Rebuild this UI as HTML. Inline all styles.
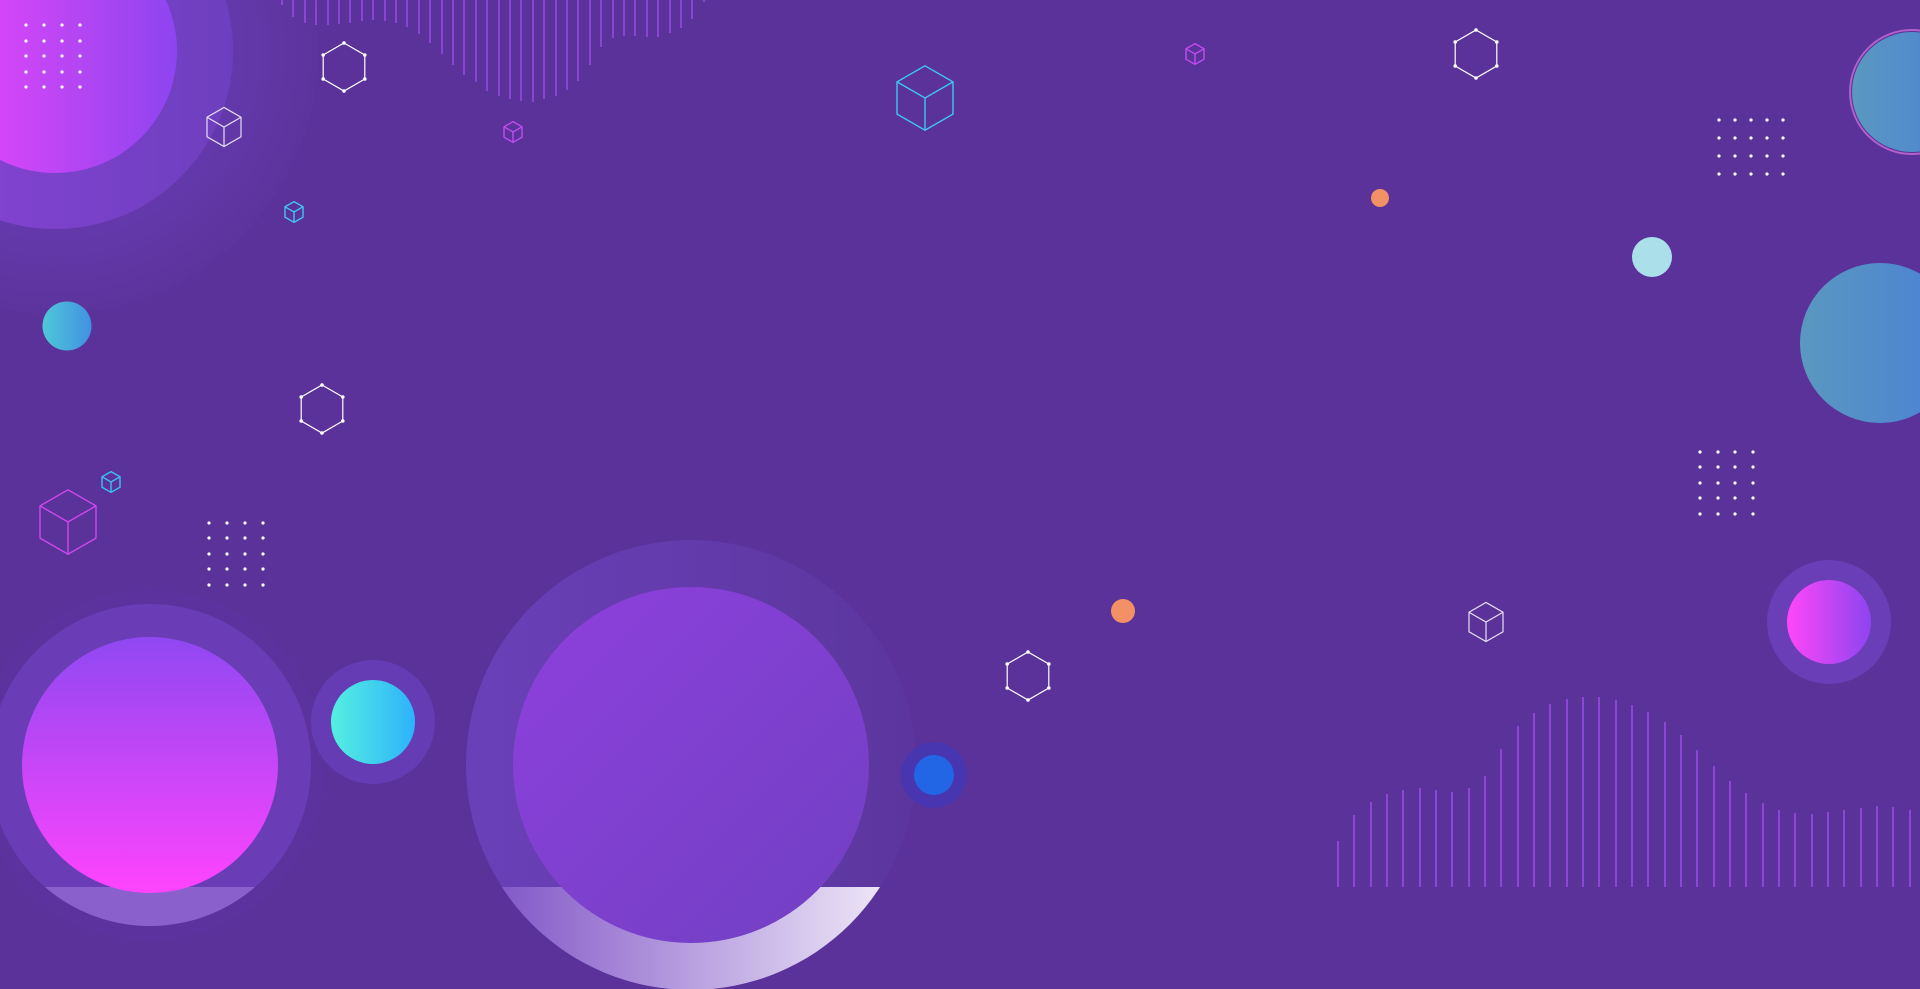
<!DOCTYPE html>
<html><head><meta charset="utf-8"><style>
html,body{margin:0;padding:0;background:#5a3299;overflow:hidden}
svg{display:block}
</style></head><body>
<svg width="1920" height="989" viewBox="0 0 1920 989" xmlns="http://www.w3.org/2000/svg">
<defs>
<linearGradient id="gTL" x1="0" y1="0" x2="1" y2="0"><stop offset="0" stop-color="#ee46fb"/><stop offset="1" stop-color="#8d45ef"/></linearGradient>
<linearGradient id="gTLring" x1="0" y1="0" x2="1" y2="0"><stop offset="0" stop-color="#8a44d8"/><stop offset="1" stop-color="#6d3fbe"/></linearGradient>
<radialGradient id="gTLout" cx="0.5" cy="0.5" r="0.5"><stop offset="0.6" stop-color="#6a3db8"/><stop offset="1" stop-color="#5e349f"/></radialGradient>
<linearGradient id="gBL" x1="0" y1="0" x2="0" y2="1"><stop offset="0" stop-color="#8f48f2"/><stop offset="1" stop-color="#ff44fd"/></linearGradient>
<linearGradient id="gCy" x1="0" y1="0" x2="1" y2="0"><stop offset="0" stop-color="#55f0e0"/><stop offset="1" stop-color="#2db2fb"/></linearGradient>
<linearGradient id="gCy2" x1="0" y1="0" x2="1" y2="0"><stop offset="0" stop-color="#4ec8d8"/><stop offset="1" stop-color="#4290e2"/></linearGradient>
<linearGradient id="gBig" x1="0" y1="0" x2="1" y2="1"><stop offset="0" stop-color="#8e40dd"/><stop offset="1" stop-color="#7040c2"/></linearGradient>
<linearGradient id="gBigRing" x1="0" y1="0" x2="1" y2="0"><stop offset="0" stop-color="#6a40b8"/><stop offset="1" stop-color="#5c369e"/></linearGradient>
<linearGradient id="gWhite" x1="0" y1="0" x2="1" y2="0"><stop offset="0" stop-color="#7a4cc4"/><stop offset="1" stop-color="#f6f2fb"/></linearGradient>
<linearGradient id="gRP" x1="0" y1="0" x2="1" y2="0"><stop offset="0" stop-color="#ff46f8"/><stop offset="1" stop-color="#8c45f0"/></linearGradient>
<linearGradient id="gRB" x1="0" y1="0" x2="1" y2="0"><stop offset="0" stop-color="#5a98c0"/><stop offset="1" stop-color="#4a80d6"/></linearGradient>
<clipPath id="cBL"><rect x="0" y="887" width="400" height="100"/></clipPath>
<clipPath id="cBig"><rect x="400" y="887" width="560" height="102"/></clipPath>
<g id="hex" fill="none" stroke="#fff" stroke-width="1.2">
<polygon points="0,-24 20.8,-12 20.8,12 0,24 -20.8,12 -20.8,-12"/>
<g fill="#fff" stroke="none"><circle cx="0" cy="-24" r="1.8"/><circle cx="20.8" cy="-12" r="1.8"/><circle cx="20.8" cy="12" r="1.8"/><circle cx="0" cy="24" r="1.8"/><circle cx="-20.8" cy="12" r="1.8"/><circle cx="-20.8" cy="-12" r="1.8"/></g>
</g>
<g id="cube"><polygon points="0,-0.575 0.5,-0.2875 0.5,0.2875 0,0.575 -0.5,0.2875 -0.5,-0.2875" vector-effect="non-scaling-stroke"/><polyline points="-0.5,-0.2875 0,0 0.5,-0.2875" vector-effect="non-scaling-stroke"/><line x1="0" y1="0" x2="0" y2="0.575" vector-effect="non-scaling-stroke"/></g>
</defs>

<circle cx="55" cy="51" r="263" fill="url(#gTLout)" opacity="0.7"/>
<circle cx="55" cy="51" r="178" fill="url(#gTLring)"/>
<circle cx="55" cy="51" r="122" fill="url(#gTL)"/>

<g fill="#fff">
<circle cx="26" cy="25" r="1.6"/><circle cx="44" cy="25" r="1.6"/><circle cx="62" cy="25" r="1.6"/><circle cx="80" cy="25" r="1.6"/>
<circle cx="26" cy="41" r="1.6"/><circle cx="44" cy="41" r="1.6"/><circle cx="62" cy="41" r="1.6"/><circle cx="80" cy="41" r="1.6"/>
<circle cx="26" cy="56" r="1.6"/><circle cx="44" cy="56" r="1.6"/><circle cx="62" cy="56" r="1.6"/><circle cx="80" cy="56" r="1.6"/>
<circle cx="26" cy="72" r="1.6"/><circle cx="44" cy="72" r="1.6"/><circle cx="62" cy="72" r="1.6"/><circle cx="80" cy="72" r="1.6"/>
<circle cx="26" cy="87" r="1.6"/><circle cx="44" cy="87" r="1.6"/><circle cx="62" cy="87" r="1.6"/><circle cx="80" cy="87" r="1.6"/>
</g>
<g fill="#fff">
<circle cx="209" cy="523" r="1.6"/><circle cx="227" cy="523" r="1.6"/><circle cx="245" cy="523" r="1.6"/><circle cx="263" cy="523" r="1.6"/>
<circle cx="209" cy="538" r="1.6"/><circle cx="227" cy="538" r="1.6"/><circle cx="245" cy="538" r="1.6"/><circle cx="263" cy="538" r="1.6"/>
<circle cx="209" cy="554" r="1.6"/><circle cx="227" cy="554" r="1.6"/><circle cx="245" cy="554" r="1.6"/><circle cx="263" cy="554" r="1.6"/>
<circle cx="209" cy="569" r="1.6"/><circle cx="227" cy="569" r="1.6"/><circle cx="245" cy="569" r="1.6"/><circle cx="263" cy="569" r="1.6"/>
<circle cx="209" cy="585" r="1.6"/><circle cx="227" cy="585" r="1.6"/><circle cx="245" cy="585" r="1.6"/><circle cx="263" cy="585" r="1.6"/>
</g>
<g fill="#fff">
<circle cx="1719" cy="120" r="1.6"/><circle cx="1735" cy="120" r="1.6"/><circle cx="1751" cy="120" r="1.6"/><circle cx="1767" cy="120" r="1.6"/><circle cx="1783" cy="120" r="1.6"/>
<circle cx="1719" cy="138" r="1.6"/><circle cx="1735" cy="138" r="1.6"/><circle cx="1751" cy="138" r="1.6"/><circle cx="1767" cy="138" r="1.6"/><circle cx="1783" cy="138" r="1.6"/>
<circle cx="1719" cy="156" r="1.6"/><circle cx="1735" cy="156" r="1.6"/><circle cx="1751" cy="156" r="1.6"/><circle cx="1767" cy="156" r="1.6"/><circle cx="1783" cy="156" r="1.6"/>
<circle cx="1719" cy="174" r="1.6"/><circle cx="1735" cy="174" r="1.6"/><circle cx="1751" cy="174" r="1.6"/><circle cx="1767" cy="174" r="1.6"/><circle cx="1783" cy="174" r="1.6"/>
</g>
<g fill="#fff">
<circle cx="1700" cy="452" r="1.6"/><circle cx="1718" cy="452" r="1.6"/><circle cx="1735" cy="452" r="1.6"/><circle cx="1753" cy="452" r="1.6"/>
<circle cx="1700" cy="467" r="1.6"/><circle cx="1718" cy="467" r="1.6"/><circle cx="1735" cy="467" r="1.6"/><circle cx="1753" cy="467" r="1.6"/>
<circle cx="1700" cy="483" r="1.6"/><circle cx="1718" cy="483" r="1.6"/><circle cx="1735" cy="483" r="1.6"/><circle cx="1753" cy="483" r="1.6"/>
<circle cx="1700" cy="498" r="1.6"/><circle cx="1718" cy="498" r="1.6"/><circle cx="1735" cy="498" r="1.6"/><circle cx="1753" cy="498" r="1.6"/>
<circle cx="1700" cy="514" r="1.6"/><circle cx="1718" cy="514" r="1.6"/><circle cx="1735" cy="514" r="1.6"/><circle cx="1753" cy="514" r="1.6"/>
</g>

<g stroke="#a24ff0" stroke-width="1.3">
<line x1="282" y1="0" x2="282" y2="5"/><line x1="293" y1="0" x2="293" y2="17"/><line x1="305" y1="0" x2="305" y2="23"/><line x1="316" y1="0" x2="316" y2="25"/><line x1="328" y1="0" x2="328" y2="25"/><line x1="339" y1="0" x2="339" y2="24"/><line x1="350" y1="0" x2="350" y2="23"/><line x1="362" y1="0" x2="362" y2="21"/><line x1="373" y1="0" x2="373" y2="20"/><line x1="385" y1="0" x2="385" y2="21"/><line x1="396" y1="0" x2="396" y2="23"/><line x1="407" y1="0" x2="407" y2="27"/><line x1="419" y1="0" x2="419" y2="34"/><line x1="430" y1="0" x2="430" y2="43"/><line x1="442" y1="0" x2="442" y2="54"/><line x1="453" y1="0" x2="453" y2="65"/><line x1="464" y1="0" x2="464" y2="75"/><line x1="476" y1="0" x2="476" y2="82"/><line x1="487" y1="0" x2="487" y2="91"/><line x1="499" y1="0" x2="499" y2="96"/><line x1="510" y1="0" x2="510" y2="99"/><line x1="521" y1="0" x2="521" y2="101"/><line x1="533" y1="0" x2="533" y2="102"/><line x1="544" y1="0" x2="544" y2="99"/><line x1="556" y1="0" x2="556" y2="96"/><line x1="567" y1="0" x2="567" y2="90"/><line x1="578" y1="0" x2="578" y2="81"/><line x1="590" y1="0" x2="590" y2="65"/><line x1="601" y1="0" x2="601" y2="47"/><line x1="613" y1="0" x2="613" y2="38"/><line x1="624" y1="0" x2="624" y2="36"/><line x1="635" y1="0" x2="635" y2="36"/><line x1="647" y1="0" x2="647" y2="37"/><line x1="658" y1="0" x2="658" y2="37"/><line x1="670" y1="0" x2="670" y2="33"/><line x1="681" y1="0" x2="681" y2="28"/><line x1="692" y1="0" x2="692" y2="19"/><line x1="704" y1="0" x2="704" y2="2"/>
</g>

<g stroke="#a24ff0" stroke-width="1.4">
<line x1="1338" y1="841" x2="1338" y2="887"/><line x1="1354" y1="815" x2="1354" y2="887"/><line x1="1371" y1="802" x2="1371" y2="887"/><line x1="1387" y1="794" x2="1387" y2="887"/><line x1="1403" y1="790" x2="1403" y2="887"/><line x1="1420" y1="788" x2="1420" y2="887"/><line x1="1436" y1="790" x2="1436" y2="887"/><line x1="1452" y1="792" x2="1452" y2="887"/><line x1="1469" y1="788" x2="1469" y2="887"/><line x1="1485" y1="776" x2="1485" y2="887"/><line x1="1501" y1="749" x2="1501" y2="887"/><line x1="1518" y1="726" x2="1518" y2="887"/><line x1="1534" y1="713" x2="1534" y2="887"/><line x1="1550" y1="704" x2="1550" y2="887"/><line x1="1567" y1="699" x2="1567" y2="887"/><line x1="1583" y1="697" x2="1583" y2="887"/><line x1="1599" y1="697" x2="1599" y2="887"/><line x1="1616" y1="700" x2="1616" y2="887"/><line x1="1632" y1="705" x2="1632" y2="887"/><line x1="1648" y1="712" x2="1648" y2="887"/><line x1="1665" y1="722" x2="1665" y2="887"/><line x1="1681" y1="735" x2="1681" y2="887"/><line x1="1697" y1="750" x2="1697" y2="887"/><line x1="1714" y1="766" x2="1714" y2="887"/><line x1="1730" y1="781" x2="1730" y2="887"/><line x1="1746" y1="793" x2="1746" y2="887"/><line x1="1763" y1="803" x2="1763" y2="887"/><line x1="1779" y1="810" x2="1779" y2="887"/><line x1="1795" y1="813" x2="1795" y2="887"/><line x1="1812" y1="814" x2="1812" y2="887"/><line x1="1828" y1="812" x2="1828" y2="887"/><line x1="1844" y1="810" x2="1844" y2="887"/><line x1="1861" y1="808" x2="1861" y2="887"/><line x1="1877" y1="806" x2="1877" y2="887"/><line x1="1893" y1="807" x2="1893" y2="887"/><line x1="1910" y1="810" x2="1910" y2="887"/>
</g>

<use href="#hex" transform="translate(344,67)"/>
<use href="#hex" transform="translate(322,409)"/>
<use href="#hex" transform="translate(1028,676)"/>
<use href="#hex" transform="translate(1476,54)"/>

<use href="#cube" fill="none" stroke="#e6def5" stroke-width="1.2" transform="translate(224,127) scale(34)"/>
<use href="#cube" fill="none" stroke="#c04cf0" stroke-width="1.4" transform="translate(513,132) scale(18)"/>
<use href="#cube" fill="none" stroke="#3ec8f0" stroke-width="1.4" transform="translate(294,212) scale(18)"/>
<use href="#cube" fill="none" stroke="#3ec8f0" stroke-width="1.4" transform="translate(925,98) scale(56)"/>
<use href="#cube" fill="none" stroke="#3ec0f0" stroke-width="1.4" transform="translate(111,482) scale(18)"/>
<use href="#cube" fill="none" stroke="#d048f0" stroke-width="1.4" transform="translate(68,522) scale(56)"/>
<use href="#cube" fill="none" stroke="#c04cf0" stroke-width="1.4" transform="translate(1195,54) scale(18)"/>
<use href="#cube" fill="none" stroke="#e6def5" stroke-width="1.2" transform="translate(1486,622) scale(34)"/>

<circle cx="67" cy="326" r="24.5" fill="url(#gCy2)"/>
<circle cx="1123" cy="611" r="12" fill="#f39166"/>
<circle cx="1380" cy="198" r="9" fill="#f39166"/>
<circle cx="1652" cy="257" r="20" fill="#abe0ea"/>
<circle cx="1880" cy="343" r="80" fill="url(#gRB)"/>
<circle cx="1912" cy="92" r="62" fill="none" stroke="#b060c8" stroke-width="2"/>
<circle cx="1912" cy="92" r="60" fill="url(#gRB)"/>

<circle cx="1829" cy="622" r="62" fill="#6a3eb6"/>
<circle cx="1829" cy="622" r="42" fill="url(#gRP)"/>

<circle cx="150" cy="765" r="175" fill="#5e34a4" opacity="0.4"/>
<circle cx="150" cy="765" r="161" fill="#6a3db6"/>
<circle cx="150" cy="765" r="161" fill="#8a60cc" clip-path="url(#cBL)"/>
<circle cx="150" cy="765" r="128" fill="url(#gBL)"/>

<circle cx="373" cy="722" r="62" fill="#653cb4"/>
<circle cx="373" cy="722" r="42" fill="url(#gCy)"/>

<circle cx="691" cy="765" r="225" fill="url(#gBigRing)"/>
<circle cx="691" cy="765" r="225" fill="url(#gWhite)" clip-path="url(#cBig)"/>
<circle cx="691" cy="765" r="178" fill="url(#gBig)"/>

<circle cx="934" cy="775" r="33" fill="#4736b0"/>
<circle cx="934" cy="775" r="20" fill="#2266e6"/>
</svg>
</body></html>
